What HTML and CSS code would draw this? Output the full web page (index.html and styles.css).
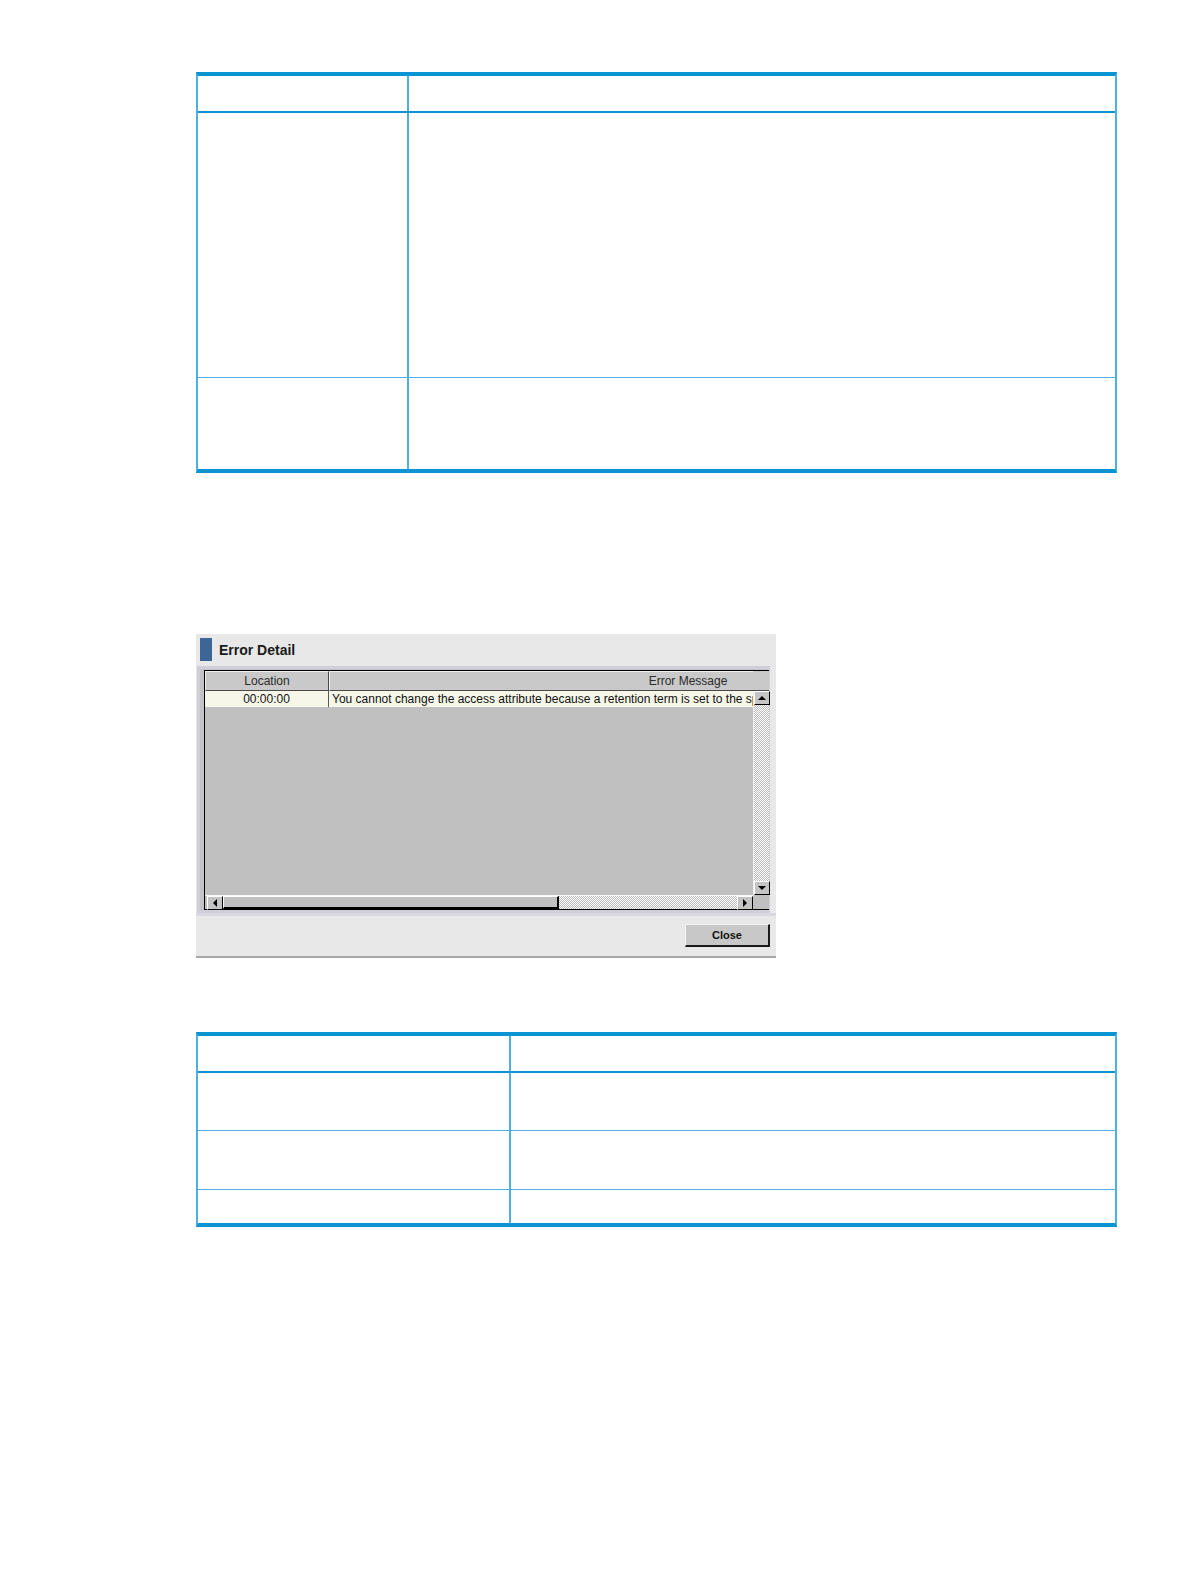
FILE: index.html
```html
<!DOCTYPE html>
<html>
<head>
<meta charset="utf-8">
<link rel="stylesheet" href="styles.css">
</head>
<body>
<div class="page">
  <div class="tbl t1">
    <div class="row head"><div class="c"></div><div class="c"></div></div>
    <div class="row r1"><div class="c"></div><div class="c"></div></div>
    <div class="row r2 last"><div class="c"></div><div class="c"></div></div>
  </div>

  <div class="dlg">
    <div class="dlg-title"><span class="mark"></span><span class="ttl">Error Detail</span></div>
    <div class="panel">
      <div class="sp">
        <div class="colhead">
          <div class="hcell loc">Location</div>
          <div class="hcell msg">Error Message</div>
        </div>
        <div class="corner top"></div>
        <div class="viewport">
          <div class="drow">
            <div class="dcell loc">00:00:00</div>
            <div class="dcell msg">You cannot change the access attribute because a retention term is set to the specified volume.</div>
          </div>
        </div>
        <div class="vscroll">
          <div class="sbtn up"><span class="tri tri-up"></span></div>
          <div class="track"></div>
          <div class="sbtn dn"><span class="tri tri-dn"></span></div>
        </div>
        <div class="hscroll">
          <div class="sbtn lf"><span class="tri tri-lf"></span></div>
          <div class="thumb"></div>
          <div class="track"></div>
          <div class="sbtn rt"><span class="tri tri-rt"></span></div>
        </div>
        <div class="corner bot"></div>
      </div>
    </div>
    <div class="dlg-foot"><div class="btn">Close</div></div>
  </div>

  <div class="tbl t2">
    <div class="row head"><div class="c"></div><div class="c"></div></div>
    <div class="row s1"><div class="c"></div><div class="c"></div></div>
    <div class="row s2"><div class="c"></div><div class="c"></div></div>
    <div class="row s3 last"><div class="c"></div><div class="c"></div></div>
  </div>
</div>
</body>
</html>
```

FILE: styles.css
```css
html, body { margin: 0; padding: 0; background: #fff; }
body { font-family: "Liberation Sans", Arial, sans-serif; }

.page {
  padding: 72px 0 0 196px;
  width: 921px;
}

/* document tables */
.tbl {
  box-sizing: border-box;
  width: 921px;
  border-top: 4px solid #0b94d3;
  border-bottom: 4px solid #0b94d3;
  border-left: 2px solid #4cb0e0;
  border-right: 2px solid #4cb0e0;
}
.row { display: grid; }
.t1 .row { grid-template-columns: 209px 1fr; }
.t2 .row { grid-template-columns: 311px 1fr; }
.row .c + .c { border-left: 2px solid #4cb0e0; }
.row { border-bottom: 1px solid #4cb0e0; }
.row.head { border-bottom: 2px solid #0b94d3; }
.row.last { border-bottom: none; }

.t1 .head { height: 35px; }
.t1 .r1 { height: 264px; }
.t1 .r2 { height: 91px; }

.t2 { margin-top: 74px; }
.t2 .head { height: 35px; }
.t2 .s1 { height: 57px; }
.t2 .s2 { height: 58px; }
.t2 .s3 { height: 33px; }

/* dialog */
.dlg {
  margin-top: 161px;
  width: 580px;
  background: #e8e8e8;
  border-bottom: 2px solid #a8a8a8;
}
.dlg-title {
  height: 32px;
  display: flex;
  align-items: flex-start;
}
.mark {
  display: block;
  width: 12px;
  height: 23px;
  margin: 4px 0 0 4px;
  background: #3d6596;
}
.ttl {
  margin: 8px 0 0 7px;
  font-weight: bold;
  font-size: 14px;
  color: #1a1a1a;
  line-height: 17px;
}
.panel {
  margin-left: 1px;
  width: 573px;
  box-sizing: border-box;
  border: 3px solid #cfcfd8;
  padding: 1px 0 0 4px;
  background: #c4c4c8;
}
.sp {
  display: grid;
  grid-template-columns: 548px 16px;
  grid-template-rows: 20px 204px 14px;
  border-top: 1px solid #000;
  border-left: 1px solid #000;
  border-bottom: 1px solid #000;
  background: #c0c0c0;
  width: 564px;
}
.colhead {
  display: flex;
  overflow: hidden;
  background: #c9c9c9;
}
.hcell {
  flex: none;
  box-sizing: border-box;
  height: 20px;
  font-size: 12px;
  line-height: 19px;
  color: #2a2a2a;
  text-align: center;
  background: #c9c9c9;
  border-top: 1px solid #f0f0f0;
  border-left: 1px solid #f0f0f0;
  border-right: 1px solid #4a4a4a;
  border-bottom: 1px solid #4a4a4a;
}
.hcell.loc { width: 124px; }
.hcell.msg { width: 718px; }
.corner.top {
  background: #c9c9c9;
  border-bottom: 1px solid #4a4a4a;
}
.viewport {
  overflow: hidden;
  background: #c0c0c0;
}
.drow {
  display: flex;
  height: 16px;
  background: #f6f7e8;
  border-bottom: 1px solid #c0c0c0;
}
.dcell {
  flex: none;
  box-sizing: border-box;
  height: 16px;
  font-size: 12px;
  line-height: 16px;
  color: #111;
  white-space: nowrap;
  overflow: hidden;
}
.dcell.loc { width: 124px; text-align: center; border-right: 1px solid #5a5a5a; }
.dcell.msg { width: 720px; padding-left: 3px; }

.vscroll {
  display: flex;
  flex-direction: column;
  border-left: 1px solid #f0f0f0;
}
.vscroll .track { flex: 1; }
.track {
  background: repeating-conic-gradient(#ffffff 0 25%, #bcbcbc 0 50%) 0 0 / 2px 2px;
}
.sbtn {
  box-sizing: border-box;
  background: #c4c4c4;
  border-top: 1px solid #fff;
  border-left: 1px solid #fff;
  border-right: 1px solid #000;
  border-bottom: 1px solid #000;
  display: flex;
  align-items: center;
  justify-content: center;
}
.vscroll .sbtn { height: 14px; width: 16px; }
.hscroll {
  display: flex;
  border-top: 1px solid #f8f8f8;
  box-sizing: border-box;
}
.hscroll .sbtn { width: 16px; height: 14px; }
.hscroll .lf { margin-left: 2px; }
.hscroll .track { flex: 1; }
.thumb {
  width: 336px;
  box-sizing: border-box;
  background: #c0c0c0;
  border-top: 1px solid #fff;
  border-left: 1px solid #fff;
  border-right: 2px solid #000;
  border-bottom: 2px solid #000;
}
.corner.bot { background: #c0c0c0; }

.tri { width: 0; height: 0; display: block; }
.tri-up { border-left: 4px solid transparent; border-right: 4px solid transparent; border-bottom: 4px solid #000; }
.tri-dn { border-left: 4px solid transparent; border-right: 4px solid transparent; border-top: 4px solid #000; }
.tri-lf { border-top: 4px solid transparent; border-bottom: 4px solid transparent; border-right: 4px solid #000; }
.tri-rt { border-top: 4px solid transparent; border-bottom: 4px solid transparent; border-left: 4px solid #000; }

.dlg-foot {
  border-top: 3px solid #d8d8e2;
  height: 40px;
  display: flex;
  justify-content: flex-end;
  align-items: flex-start;
}
.btn {
  margin: 8px 6px 0 0;
  width: 85px;
  height: 23px;
  box-sizing: border-box;
  background: #c8c8c8;
  border-top: 1px solid #f4f4f4;
  border-left: 1px solid #f4f4f4;
  border-right: 2px solid #1a1a1a;
  border-bottom: 2px solid #1a1a1a;
  font-weight: bold;
  font-size: 11px;
  line-height: 20px;
  text-align: center;
  color: #111;
}
```
